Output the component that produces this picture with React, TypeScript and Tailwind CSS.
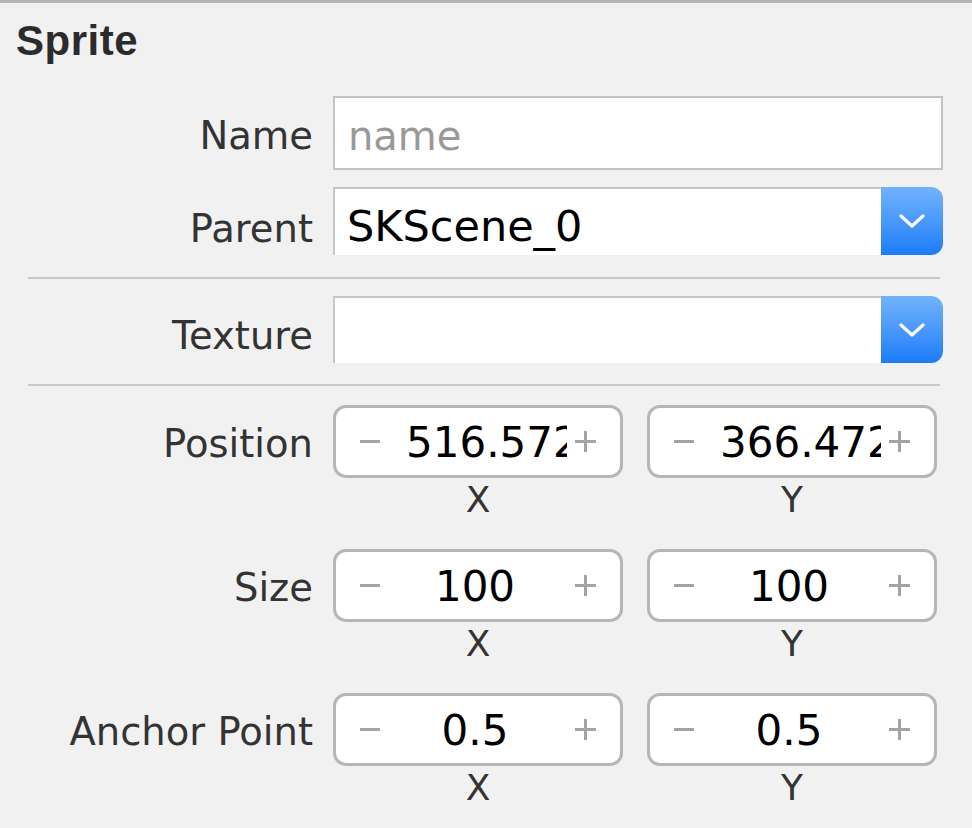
import React from 'react';

const FONT = { fontFamily: '"DejaVu Sans", "Liberation Sans", sans-serif' };
const TITLE_FONT = { fontFamily: '"Liberation Sans", Arial, sans-serif' };

function Chevron() {
  return (
    <svg width="26" height="14" viewBox="0 0 26 14" fill="none">
      <polyline points="2,2 13,12 24,2" stroke="white" strokeWidth="3.2" strokeLinecap="round" strokeLinejoin="round" />
    </svg>
  );
}

function Dropdown({ value, height }: { value: string; height: string }) {
  return (
    <div className={`flex w-[610px] ${height}`}>
      <div className="flex-1 flex items-center bg-white border-t-2 border-l-2 border-[#c6c6c6] pl-3 pt-[8px] text-[43px] leading-none text-black">
        {value}
      </div>
      <div className="w-[62px] flex items-center justify-center rounded-r-[12px] bg-linear-to-b from-[#70b3fc] to-[#1a7bf9]">
        <Chevron />
      </div>
    </div>
  );
}

function Stepper({ value, overflow }: { value: string; overflow?: boolean }) {
  return (
    <div className="w-[290px] h-[73px] bg-white border-[3px] border-[#b6b6b6] rounded-[13px] flex items-center pl-[24px]">
      <div className="w-[20px] h-[3px] bg-[#a3a3a3]" />
      <div
        className={`ml-[19px] w-[168px] h-[56px] pt-[3px] flex items-center overflow-hidden whitespace-nowrap text-[42px] leading-none text-black ${
          overflow ? 'justify-start pl-[7px]' : 'justify-center pr-[16px]'
        }`}
      >
        {value}
      </div>
      <div className="ml-[8px] w-[21px] h-[21px] relative">
        <div className="absolute left-0 top-[9px] w-[21px] h-[3px] bg-[#a3a3a3]" />
        <div className="absolute top-0 left-[9px] w-[3px] h-[21px] bg-[#a3a3a3]" />
      </div>
    </div>
  );
}

function VectorRow({ label, x, y, overflow, mt }: { label: string; x: string; y: string; overflow?: boolean; mt: string }) {
  return (
    <div className={`flex ${mt}`}>
      <div className="w-[313px] pt-[19px] text-right text-[38.5px] leading-[40px] text-[#333]">{label}</div>
      <div className="ml-[20px] flex gap-[24px]">
        {[{ v: x, axis: 'X' }, { v: y, axis: 'Y' }].map((item) => (
          <div key={item.axis} className="flex flex-col items-center">
            <Stepper value={item.v} overflow={overflow} />
            <div className="mt-[4px] text-[36px] leading-[36px] text-[#333]">{item.axis}</div>
          </div>
        ))}
      </div>
    </div>
  );
}

export default function App() {
  return (
    <div className="w-[972px] h-[828px] bg-[#f1f1f1] border-t-[3px] border-[#b4b4b4] overflow-hidden" style={FONT}>
      <div className="mt-[18px] pl-4 text-[42px] tracking-[0.5px] leading-[40px] font-bold text-[#2b2b2b]" style={TITLE_FONT}>
        Sprite
      </div>

      {/* Name */}
      <div className="flex mt-[35px]">
        <div className="w-[313px] pt-[20px] text-right text-[38.5px] leading-[40px] text-[#333]">Name</div>
        <div className="ml-[20px] w-[610px] h-[74px] bg-white border-2 border-[#c3c3c3] flex items-center pl-[13px] pt-[5px] text-[40px] leading-none text-[#999]">
          name
        </div>
      </div>

      {/* Parent */}
      <div className="flex mt-[17px]">
        <div className="w-[313px] pt-[22px] text-right text-[38.5px] leading-[40px] text-[#333]">Parent</div>
        <div className="ml-[20px]">
          <Dropdown value="SKScene_0" height="h-[68px]" />
        </div>
      </div>

      <div className="mt-[22px] ml-[28px] w-[912px] h-[2px] bg-[#c9c9c9]" />

      {/* Texture */}
      <div className="flex mt-[17px]">
        <div className="w-[313px] pt-[20px] text-right text-[38.5px] leading-[40px] text-[#333]">Texture</div>
        <div className="ml-[20px]">
          <Dropdown value="" height="h-[67px]" />
        </div>
      </div>

      <div className="mt-[21px] ml-[28px] w-[912px] h-[2px] bg-[#c9c9c9]" />

      <VectorRow label="Position" x="516.572" y="366.472" overflow mt="mt-[19px]" />
      <VectorRow label="Size" x="100" y="100" mt="mt-[31px]" />
      <VectorRow label="Anchor Point" x="0.5" y="0.5" mt="mt-[31px]" />
    </div>
  );
}
